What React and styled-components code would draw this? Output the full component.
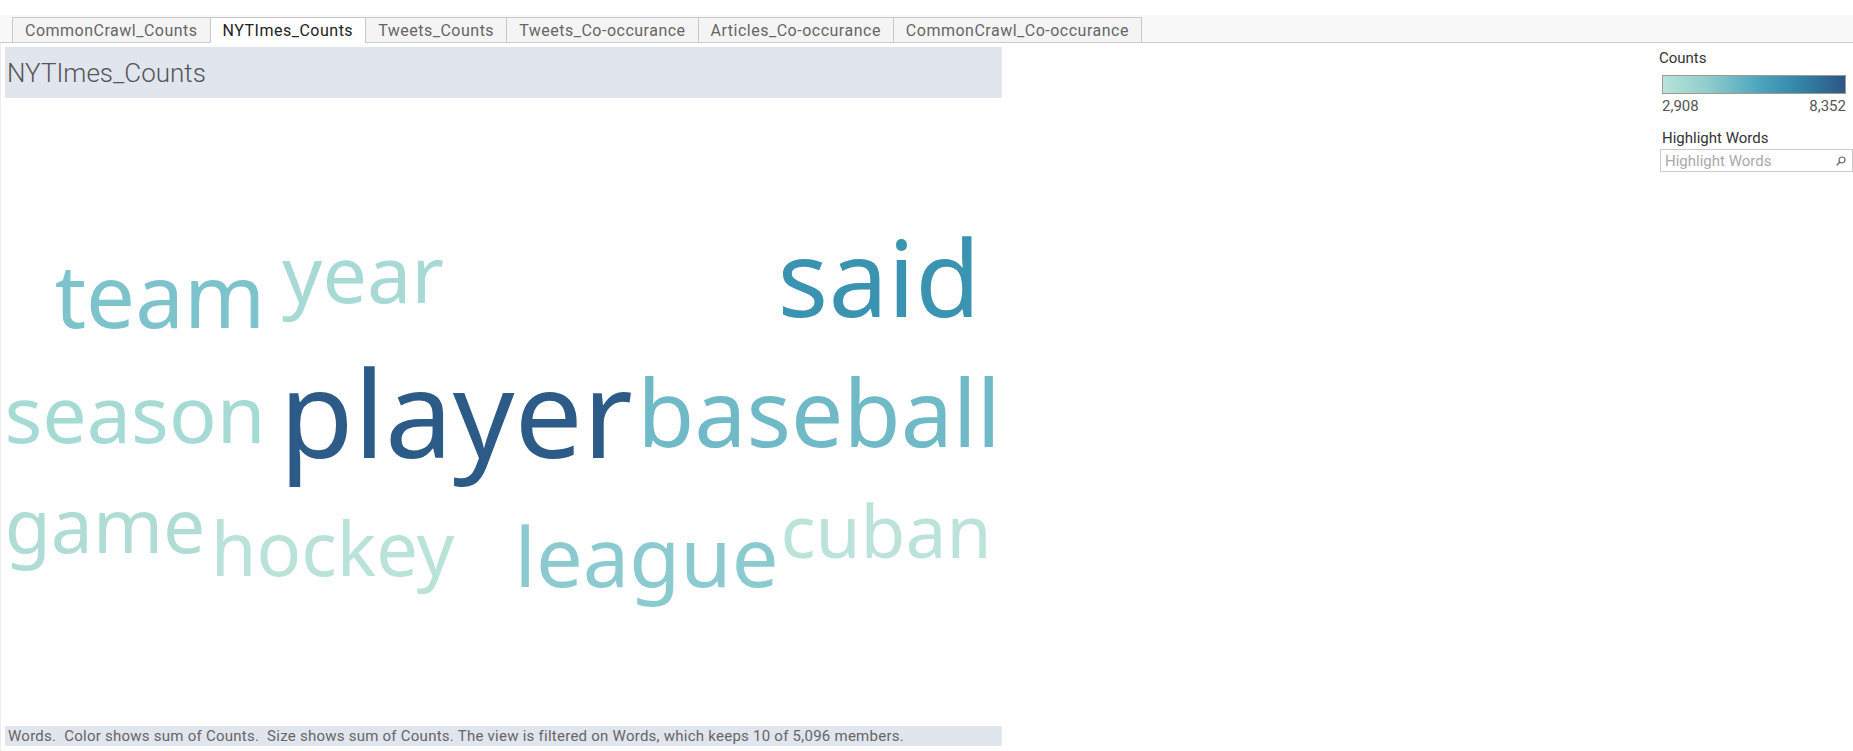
import React from "react";
import styled, { createGlobalStyle } from "styled-components";

const GlobalStyle = createGlobalStyle`
  html, body { margin: 0; padding: 0; background: #ffffff; }
  body { font-family: Roboto, "Liberation Sans", Arial, sans-serif; color: #333; }
  * { box-sizing: border-box; }
`;

const Page = styled.div`
  width: 1853px;
  height: 751px;
  overflow: hidden;
  display: flex;
  flex-direction: column;
`;

const TabStrip = styled.div`
  margin-top: 15px;
  height: 28px;
  background: #f8f8f8;
  border-bottom: 1px solid #cccccc;
  padding-left: 12px;
  display: flex;
  align-items: flex-end;
`;

const Tab = styled.div`
  height: ${(p) => (p.$active ? "26px" : "25px")};
  margin-bottom: ${(p) => (p.$active ? "-1px" : "0")};
  padding: 0 12px;
  display: flex;
  align-items: center;
  font-size: 16px;
  letter-spacing: 0.5px;
  color: ${(p) => (p.$active ? "#222" : "#666")};
  background: ${(p) => (p.$active ? "#ffffff" : "#f4f4f4")};
  border: 1px solid #c8c8c8;
  border-bottom: none;
  border-left-width: ${(p) => (p.$first ? "1px" : "0")};
  white-space: nowrap;
`;

const Dashboard = styled.div`
  flex: 1;
  display: flex;
  border-left: 1px solid #eeeeee;
`;

const VizPane = styled.div`
  width: 997px;
  margin-left: 4px;
  padding-top: 4px;
  display: flex;
  flex-direction: column;
`;

const TitleBar = styled.div`
  height: 51px;
  background: #e1e5ee;
  padding: 11px 0 0 2px;
  font-size: 26px;
  font-weight: 300;
  color: #555;
  line-height: 30px;
`;

const Cloud = styled.svg`
  display: block;
  width: 997px;
  height: 628px;
  font-family: "Noto Sans", "Open Sans", sans-serif;
`;

const Caption = styled.div`
  height: 20px;
  background: #e1e5ee;
  padding-left: 3px;
  font-size: 15px;
  line-height: 20px;
  letter-spacing: 0.25px;
  color: #666;
  white-space: nowrap;
`;

const Legend = styled.div`
  margin-left: auto;
  width: 196px;
  padding-top: 6px;
  display: flex;
  flex-direction: column;
`;

const LegendTitle = styled.div`
  font-size: 15px;
  line-height: 18px;
  color: #333;
  margin-left: ${(p) => p.$indent || 0}px;
  margin-top: ${(p) => p.$gap || 0}px;
`;

const GradientBar = styled.div`
  margin: 8px 0 0 5px;
  width: 184px;
  height: 19px;
  border: 1px solid #a09b8c;
  background: linear-gradient(
    to right,
    #b9e3d9 0%,
    #8ecccd 25%,
    #4ea6bd 52%,
    #3689ac 72%,
    #2b5786 100%
  );
`;

const RangeLabels = styled.div`
  margin: 3px 0 0 5px;
  width: 184px;
  display: flex;
  justify-content: space-between;
  font-size: 15px;
  line-height: 18px;
  color: #555;
`;

const SearchBox = styled.div`
  position: relative;
  margin: 2px 0 0 3px;
  width: 193px;
  height: 23px;
`;

const SearchInput = styled.input`
  width: 100%;
  height: 100%;
  border: 1px solid #cccccc;
  padding: 0 20px 0 4px;
  font-family: Roboto, "Liberation Sans", Arial, sans-serif;
  font-size: 15px;
  color: #333;
  background: #fff;
  outline: none;
  &::placeholder { color: #aaaaaa; }
`;

const SearchIcon = styled.svg`
  position: absolute;
  right: 7px;
  top: 7px;
  width: 10px;
  height: 10px;
`;

const tabs = [
  "CommonCrawl_Counts",
  "NYTImes_Counts",
  "Tweets_Counts",
  "Tweets_Co-occurance",
  "Articles_Co-occurance",
  "CommonCrawl_Co-occurance",
];

const words = [
  { t: "team", x: 155, y: 230, s: 87, c: "#7dc3cc" },
  { t: "year", x: 358, y: 205, s: 79, c: "#a7dad4" },
  { t: "said", x: 874, y: 219, s: 106, c: "#3a93b1" },
  { t: "season", x: 130, y: 345, s: 79, c: "#a6dad4" },
  { t: "player", x: 451, y: 360, s: 121, c: "#2d5b88" },
  { t: "baseball", x: 814, y: 349, s: 93, c: "#6fbac6" },
  { t: "game", x: 100, y: 455, s: 75, c: "#afddd6" },
  { t: "hockey", x: 327.5, y: 478, s: 74, c: "#b9e2d9" },
  { t: "league", x: 641.5, y: 489, s: 83, c: "#8bcbd0" },
  { t: "cuban", x: 881, y: 460, s: 73, c: "#bce3d9" },
];

export default function App() {
  return (
    <Page>
      <GlobalStyle />
      <TabStrip>
        {tabs.map((t, i) => (
          <Tab key={t} $active={i === 1} $first={i === 0}>
            {t}
          </Tab>
        ))}
      </TabStrip>
      <Dashboard>
        <VizPane>
          <TitleBar>NYTImes_Counts</TitleBar>
          <Cloud viewBox="0 0 997 628">
            {words.map((w) => (
              <text
                key={w.t}
                x={w.x}
                y={w.y}
                fontSize={w.s}
                fill={w.c}
                textAnchor="middle"
              >
                {w.t}
              </text>
            ))}
          </Cloud>
          <Caption>
            Words.&nbsp; Color shows sum of Counts.&nbsp; Size shows sum of Counts. The view is filtered on Words, which keeps 10 of 5,096 members.
          </Caption>
        </VizPane>
        <Legend>
          <LegendTitle $indent={2}>Counts</LegendTitle>
          <GradientBar />
          <RangeLabels>
            <span>2,908</span>
            <span>8,352</span>
          </RangeLabels>
          <LegendTitle $indent={5} $gap={14}>Highlight Words</LegendTitle>
          <SearchBox>
            <SearchInput placeholder="Highlight Words" />
            <SearchIcon viewBox="0 0 10 10">
              <circle cx="6" cy="4" r="3" fill="none" stroke="#666" strokeWidth="1.2" />
              <line x1="3.9" y1="6.1" x2="0.8" y2="9.2" stroke="#666" strokeWidth="1.4" />
            </SearchIcon>
          </SearchBox>
        </Legend>
      </Dashboard>
    </Page>
  );
}
